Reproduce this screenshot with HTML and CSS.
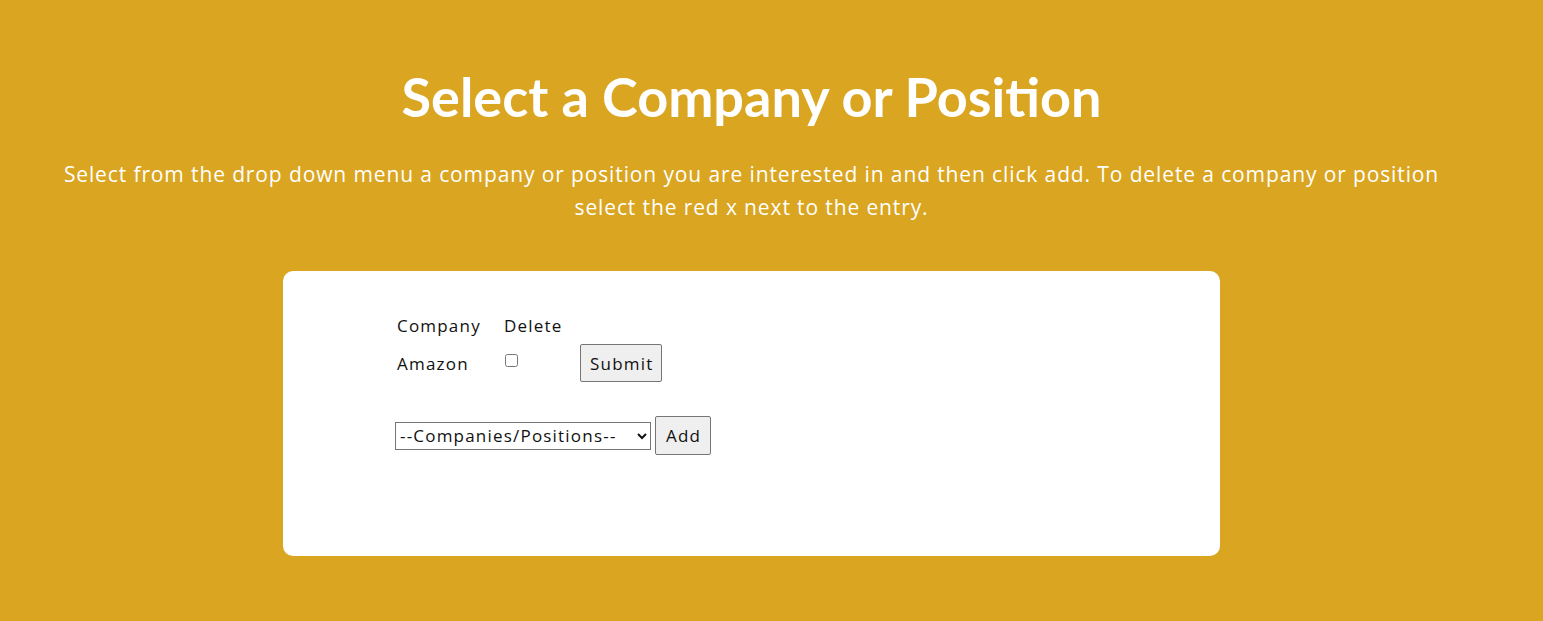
FILE: index.html
```html
<!DOCTYPE html>
<html>
<head>
<meta charset="utf-8">
<link rel="stylesheet" href="styles.css">
</head>
<body>
<div class="page">
  <h1 class="title">Select a Company or Position</h1>
  <p class="intro">Select from the drop down menu a company or position you are interested in and then click add. To delete a company or position select the red x next to the entry.</p>
  <div class="card">
    <form class="list">
      <div class="grid">
        <div class="cell head">Company</div>
        <div class="cell head">Delete</div>
        <div class="cell"></div>
        <div class="cell name">Amazon</div>
        <div class="cell check"><input type="checkbox" class="box"></div>
        <div class="cell"><button type="button" class="btn submit">Submit</button></div>
      </div>
    </form>
    <div class="add-row">
      <select class="picker">
        <option>--Companies/Positions--</option>
      </select>
      <button type="button" class="btn add">Add</button>
    </div>
  </div>
</div>
</body>
</html>
```

FILE: styles.css
```css
html, body {
  margin: 0;
  padding: 0;
}
body {
  background: #daa520;
  font-family: "Open Sans", "DejaVu Sans", sans-serif;
  color: #fff;
  height: 621px;
  overflow: hidden;
}
.page {
  padding: 64px 40px 0 0;
}
.title {
  margin: 0;
  text-align: center;
  font-family: "Lato", sans-serif;
  font-weight: 700;
  font-size: 54px;
  line-height: 66px;
}
.intro {
  margin: 28px 60px 0 60px;
  text-align: center;
  font-size: 21px;
  letter-spacing: 0.88px;
  line-height: 33px;
}
.card {
  width: 823px;
  margin: 47px auto 0;
  background: #fff;
  border-radius: 10px;
  padding: 40px 0 101px 114px;
  color: #111;
  font-size: 17px;
  letter-spacing: 1.2px;
}
.grid {
  display: grid;
  grid-template-columns: 107px 76px auto;
  grid-template-rows: 28px 48px;
  align-items: center;
}
.cell.check {
  display: flex;
  align-items: center;
  padding-bottom: 5px;
}
.box {
  margin: 0 0 0 1px;
  width: 13px;
  height: 13px;
}
.btn {
  font-family: inherit;
  font-size: 17px;
  letter-spacing: 1.2px;
  color: #111;
  background: #efefef;
  border: 1px solid #767676;
  border-radius: 2px;
  padding: 0 8px 0 9px;
  height: 38px;
}
.add-row {
  display: flex;
  align-items: center;
  gap: 4px;
  margin-top: 29px;
  margin-left: -2px;
}
.picker {
  font-family: inherit;
  font-size: 17px;
  letter-spacing: 1.2px;
  color: #111;
  height: 28px;
  width: 256px;
  border: 1px solid #767676;
  background: #fff;
}
.btn.add {
  height: 39px;
  padding: 0 9px 0 10px;
}
```
